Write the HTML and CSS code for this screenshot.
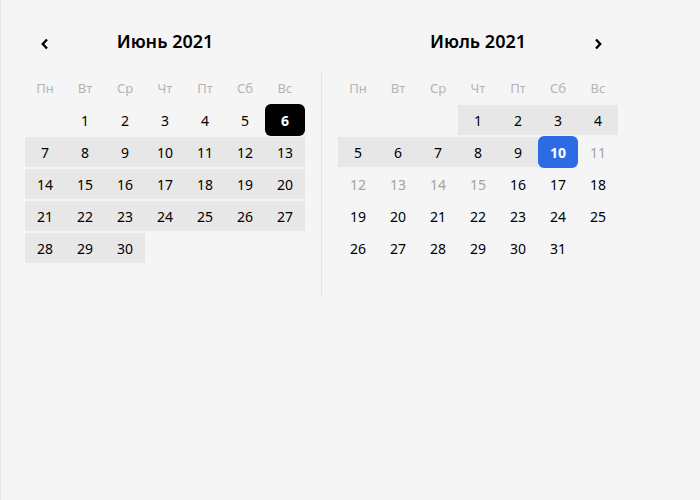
FILE: index.html
```html
<!DOCTYPE html>
<html lang="ru">
<head>
<meta charset="utf-8">
<title>Календарь</title>
<link rel="stylesheet" href="styles.css">
</head>
<body>
<div class="picker">
  <section class="month">
    <header class="month-head">
      <button class="nav" aria-label="Предыдущий месяц">
        <svg width="10" height="12" viewBox="0 0 10 12"><path d="M7 1.5 L2.8 6 L7 10.5" fill="none" stroke="#000" stroke-width="2.4" stroke-linejoin="miter"/></svg>
      </button>
      <h2 class="title">Июнь 2021</h2>
      <span class="nav-spacer"></span>
    </header>
    <div class="grid">
      <span class="wd">Пн</span><span class="wd">Вт</span><span class="wd">Ср</span><span class="wd">Чт</span><span class="wd">Пт</span><span class="wd">Сб</span><span class="wd">Вс</span>
      <span class="day"></span><span class="day">1</span><span class="day">2</span><span class="day">3</span><span class="day">4</span><span class="day">5</span><span class="day sel-black">6</span>
      <span class="day in">7</span><span class="day in">8</span><span class="day in">9</span><span class="day in">10</span><span class="day in">11</span><span class="day in">12</span><span class="day in">13</span>
      <span class="day in">14</span><span class="day in">15</span><span class="day in">16</span><span class="day in">17</span><span class="day in">18</span><span class="day in">19</span><span class="day in">20</span>
      <span class="day in">21</span><span class="day in">22</span><span class="day in">23</span><span class="day in">24</span><span class="day in">25</span><span class="day in">26</span><span class="day in">27</span>
      <span class="day in">28</span><span class="day in">29</span><span class="day in">30</span>
    </div>
  </section>
  <div class="divider"></div>
  <section class="month">
    <header class="month-head">
      <span class="nav-spacer"></span>
      <h2 class="title">Июль 2021</h2>
      <button class="nav" aria-label="Следующий месяц">
        <svg width="10" height="12" viewBox="0 0 10 12"><path d="M3 1.5 L7.2 6 L3 10.5" fill="none" stroke="#000" stroke-width="2.4" stroke-linejoin="miter"/></svg>
      </button>
    </header>
    <div class="grid">
      <span class="wd">Пн</span><span class="wd">Вт</span><span class="wd">Ср</span><span class="wd">Чт</span><span class="wd">Пт</span><span class="wd">Сб</span><span class="wd">Вс</span>
      <span class="day"></span><span class="day"></span><span class="day"></span><span class="day in">1</span><span class="day in">2</span><span class="day in">3</span><span class="day in">4</span>
      <span class="day in">5</span><span class="day in">6</span><span class="day in">7</span><span class="day in">8</span><span class="day in">9</span><span class="day sel-blue">10</span><span class="day off">11</span>
      <span class="day off">12</span><span class="day off">13</span><span class="day off">14</span><span class="day off">15</span><span class="day">16</span><span class="day">17</span><span class="day">18</span>
      <span class="day">19</span><span class="day">20</span><span class="day">21</span><span class="day">22</span><span class="day">23</span><span class="day">24</span><span class="day">25</span>
      <span class="day">26</span><span class="day">27</span><span class="day">28</span><span class="day">29</span><span class="day">30</span><span class="day">31</span>
    </div>
  </section>
</div>
</body>
</html>
```

FILE: styles.css
```css
html, body {
  margin: 0;
  height: 100%;
}
body {
  background: #f5f5f5;
  border-left: 1px solid #e6e6e6;
  box-sizing: border-box;
  font-family: "Noto Sans", "Open Sans", sans-serif;
  color: #000;
}
.picker {
  display: flex;
  align-items: flex-start;
  gap: 16px;
  padding: 26px 0 0 24px;
}
.month {
  width: 280px;
}
.month-head {
  display: flex;
  align-items: center;
  justify-content: space-between;
  height: 32px;
  margin-bottom: 14px;
}
.nav, .nav-spacer {
  width: 40px;
  height: 32px;
  display: flex;
  align-items: center;
  justify-content: center;
  padding: 0;
  border: 0;
  background: none;
}
.nav svg {
  display: block;
  margin-top: 3px;
}
.title {
  margin: 0;
  font-size: 18px;
  font-weight: 600;
  line-height: 32px;
  margin-top: -2px;
}
.divider {
  width: 1px;
  height: 224px;
  margin-top: 46px;
  background: #e4e4e4;
}
.grid {
  display: grid;
  grid-template-columns: repeat(7, 40px);
  grid-auto-rows: 32px;
}
.wd, .day {
  display: flex;
  align-items: center;
  justify-content: center;
  box-sizing: border-box;
}
.wd {
  font-size: 13px;
  color: #b4b4b4;
}
.day {
  font-size: 14px;
  border-top: 1px solid transparent;
  border-bottom: 1px solid transparent;
  background-clip: padding-box;
}
.day.in {
  background-color: #e7e7e7;
}
.day.off {
  color: #a3a3a3;
}
.sel-black, .sel-blue {
  border: 0;
  border-radius: 6px;
  color: #fff;
  font-weight: 700;
}
.sel-black {
  background: #000;
}
.sel-blue {
  background: #2d6be5;
}
```
